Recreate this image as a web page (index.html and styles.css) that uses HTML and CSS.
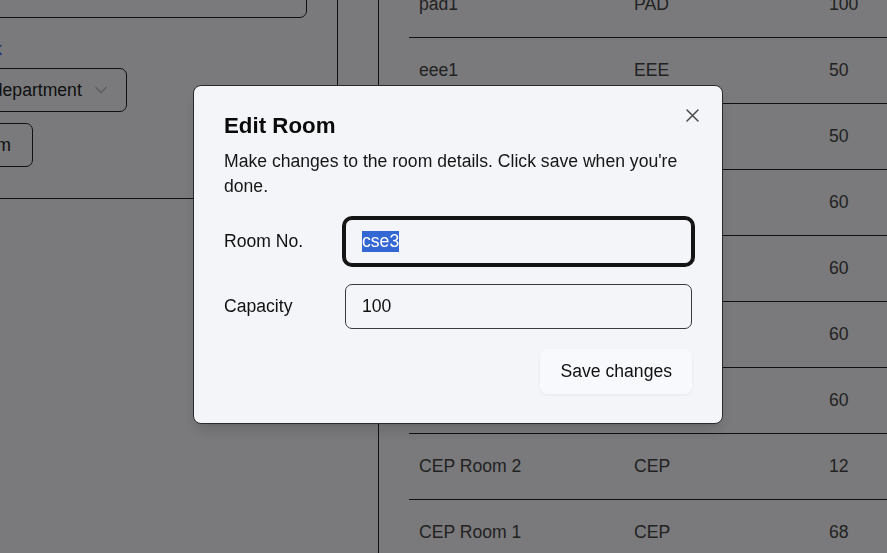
FILE: index.html
```html
<!DOCTYPE html>
<html lang="en">
<head>
<meta charset="utf-8">
<title>Rooms</title>
<link rel="stylesheet" href="styles.css">
</head>
<body>
<div class="page">
  <aside class="sidebar">
    <div class="card">
      <div class="stack">
        <div class="field"></div>
        <div class="link-label">Link</div>
        <div class="select">
          <span>Select department</span>
          <svg class="chevron" width="12" height="8" viewBox="0 0 12 8"><path d="M1 1.5 6 6.5 11 1.5" fill="none" stroke="#b4b8c0" stroke-width="1.3" stroke-linecap="round" stroke-linejoin="round"/></svg>
        </div>
        <button class="btn-outline">Add Room</button>
      </div>
    </div>
  </aside>
  <main class="content">
    <div class="table">
      <div class="row"><div class="cell">pad1</div><div class="cell">PAD</div><div class="cell">100</div></div>
      <div class="row"><div class="cell">eee1</div><div class="cell">EEE</div><div class="cell">50</div></div>
      <div class="row"><div class="cell"></div><div class="cell"></div><div class="cell">50</div></div>
      <div class="row"><div class="cell"></div><div class="cell"></div><div class="cell">60</div></div>
      <div class="row"><div class="cell"></div><div class="cell"></div><div class="cell">60</div></div>
      <div class="row"><div class="cell"></div><div class="cell"></div><div class="cell">60</div></div>
      <div class="row"><div class="cell"></div><div class="cell"></div><div class="cell">60</div></div>
      <div class="row"><div class="cell">CEP Room 2</div><div class="cell">CEP</div><div class="cell">12</div></div>
      <div class="row"><div class="cell">CEP Room 1</div><div class="cell">CEP</div><div class="cell">68</div></div>
    </div>
  </main>
</div>

<div class="overlay"></div>

<div class="dialog" role="dialog">
  <button class="close" aria-label="Close">
    <svg width="13" height="13" viewBox="0 0 13 13"><path d="M1 1 12 12M12 1 1 12" fill="none" stroke="#4a4a4a" stroke-width="1.5" stroke-linecap="round"/></svg>
  </button>
  <h2 class="dialog-title">Edit Room</h2>
  <p class="dialog-desc">Make changes to the room details. Click save when you're done.</p>
  <div class="form">
    <label class="form-label" for="room">Room No.</label>
    <input id="room" class="input input-focus" value="cse3">
    <label class="form-label" for="cap">Capacity</label>
    <input id="cap" class="input" value="100">
  </div>
  <div class="footer">
    <button class="save">Save changes</button>
  </div>
</div>
<script src="script.js"></script>
</body>
</html>
```

FILE: styles.css
```css
html, body {
  margin: 0;
  padding: 0;
  height: 100%;
  overflow: hidden;
}
body {
  background: #f4f5f9;
  font-family: "Liberation Sans", Arial, sans-serif;
  font-size: 17.6px;
  color: #111;
}
.page {
  display: flex;
  height: 100vh;
}
.sidebar {
  width: 379px;
  flex: none;
  box-sizing: border-box;
  border-right: 1px solid #222;
}
.card {
  width: 338px;
  height: 199px;
  box-sizing: border-box;
  border-right: 1px solid #222;
  border-bottom: 1px solid #222;
  padding-right: 30px;
  overflow: hidden;
}
.stack {
  display: flex;
  flex-direction: column;
  align-items: flex-start;
  margin-left: -92px;
}
.field {
  align-self: stretch;
  height: 45px;
  margin-top: -27px;
  box-sizing: border-box;
  border: 1px solid #222;
  border-radius: 7px;
}
.link-label {
  margin-top: 22px;
  height: 18px;
  line-height: 18px;
  width: 94px;
  overflow: hidden;
  text-align: right;
  color: #2f64d8;
  font-size: 17.6px;
  white-space: nowrap;
  direction: rtl;
}
.select {
  margin-top: 10px;
  margin-left: 17px;
  width: 202px;
  height: 44px;
  box-sizing: border-box;
  border: 1px solid #222;
  border-radius: 7px;
  padding: 0 19px 0 13px;
  display: flex;
  align-items: center;
  justify-content: space-between;
  white-space: nowrap;
  color: #222;
}
.btn-outline {
  margin-top: 11px;
  width: 125px;
  height: 44px;
  box-sizing: border-box;
  border: 1px solid #222;
  border-radius: 7px;
  background: transparent;
  font: inherit;
  color: #222;
  padding: 0 21px 0 0;
  text-align: right;
}
.content {
  flex: 1;
  padding-left: 30px;
  min-width: 0;
}
.table {
  margin-top: -28px;
}
.row {
  display: grid;
  grid-template-columns: 215px 195px 1fr;
  height: 66px;
  box-sizing: border-box;
  border-bottom: 1px solid #222;
  align-items: center;
  color: #444;
}
.cell {
  padding-left: 10px;
  white-space: nowrap;
}
.overlay {
  position: fixed;
  inset: 0;
  background: rgba(0, 0, 0, 0.5);
}
.dialog {
  position: fixed;
  left: 193px;
  top: 85px;
  width: 530px;
  box-sizing: border-box;
  background: #f4f5f9;
  border: 1px solid #2a2a2a;
  border-radius: 8px;
  padding: 27px 30px 29px;
  box-shadow: 0 10px 15px -3px rgba(0, 0, 0, 0.12), 0 4px 6px -4px rgba(0, 0, 0, 0.1);
}
.close {
  position: absolute;
  top: 22px;
  right: 23px;
  width: 14px;
  height: 14px;
  padding: 0;
  border: 0;
  background: transparent;
  display: flex;
  align-items: center;
  justify-content: center;
}
.dialog-title {
  margin: 0;
  font-size: 22.3px;
  line-height: 26px;
  font-weight: 700;
  color: #0a0a0a;
}
.dialog-desc {
  margin: 10px 0 0;
  font-size: 17.6px;
  line-height: 25px;
  color: #161616;
}
.form {
  display: grid;
  grid-template-columns: repeat(4, 1fr);
  column-gap: 16px;
  row-gap: 20px;
  align-items: center;
  margin-top: 19.5px;
}
.form-label {
  grid-column: 1;
  color: #111;
}
.input {
  grid-column: span 3;
  height: 45px;
  box-sizing: border-box;
  border: 1px solid #3a3a3a;
  border-radius: 7px;
  background: #f4f5f9;
  padding: 0 16px;
  font: inherit;
  color: #111;
  outline: none;
}
.input-focus {
  border-color: #141414;
  box-shadow: 0 0 0 3px #141414;
}
.input::selection {
  background: #3367d4;
  color: #fff;
}
.footer {
  display: flex;
  justify-content: flex-end;
  margin-top: 20px;
}
.save {
  height: 45px;
  padding: 0 20px;
  border: 0;
  border-radius: 7px;
  background: #f8f9fc;
  box-shadow: 0 1px 3px rgba(0, 0, 0, 0.06);
  font: inherit;
  color: #111;
}
```

FILE: script.js
```js
var room = document.getElementById('room');
room.focus();
room.select();
```
